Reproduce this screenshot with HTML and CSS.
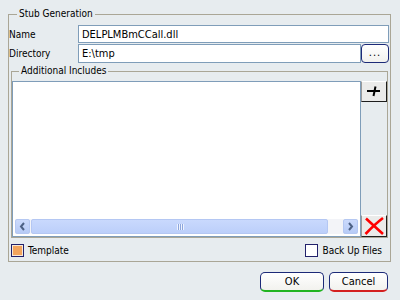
FILE: index.html
```html
<!DOCTYPE html>
<html>
<head>
<meta charset="utf-8">
<link rel="stylesheet" href="styles.css">
</head>
<body>
<div class="dialog">
  <fieldset class="group outer">
    <legend>Stub Generation</legend>
    <div class="row">
      <span class="lbl">Name</span>
      <div class="field">DELPLMBmCCall.dll</div>
    </div>
    <div class="row">
      <span class="lbl">Directory</span>
      <div class="field">E:\tmp</div>
      <button class="browse">...</button>
    </div>
    <fieldset class="group inner">
      <legend>Additional Includes</legend>
      <div class="includes">
        <div class="list">
          <div class="list-body"></div>
          <div class="hscroll">
            <div class="arrow left"><svg width="7" height="9" viewBox="0 0 7 9"><path d="M5 1 L2 4.5 L5 8" fill="none" stroke="#4d6185" stroke-width="2"/></svg></div>
            <div class="thumb"><span class="grip"></span></div>
            <div class="track"></div>
            <div class="arrow right"><svg width="7" height="9" viewBox="0 0 7 9"><path d="M2 1 L5 4.5 L2 8" fill="none" stroke="#4d6185" stroke-width="2"/></svg></div>
          </div>
        </div>
        <div class="side">
          <button class="tool"><svg width="24" height="19" viewBox="0 0 24 19"><path d="M5 9 H18" stroke="#000" stroke-width="2"/><path d="M13.5 4.5 L11.5 14" stroke="#000" stroke-width="2"/></svg></button>
          <button class="tool"><svg width="24" height="20" viewBox="0 0 24 20"><path d="M4 2.5 Q11 9 21 18" fill="none" stroke="#ff0000" stroke-width="2.6"/><path d="M21 2 Q13 8 3.5 18" fill="none" stroke="#ff0000" stroke-width="2.6"/></svg></button>
        </div>
      </div>
    </fieldset>
    <div class="checks">
      <span class="check"><span class="box on"></span>Template</span>
      <span class="check"><span class="box"></span>Back Up Files</span>
    </div>
  </fieldset>
  <div class="actions">
    <button class="btn ok">OK</button>
    <button class="btn cancel">Cancel</button>
  </div>
</div>
</body>
</html>
```
FILE: styles.css
```css
html, body {
  margin: 0;
  padding: 0;
}
body {
  width: 400px;
  height: 300px;
  overflow: hidden;
  background: #e7ecef;
  font-family: "DejaVu Sans Condensed", "Liberation Sans", sans-serif;
  font-size: 10px;
  color: #000;
}
.dialog {
  padding: 8px 0 0 8px;
}
.group {
  margin: 0;
  border: 1px solid #aaa696;
  box-sizing: border-box;
  min-width: 0;
}
.group > legend {
  line-height: 12px;
  padding: 0 2px;
}
.outer {
  width: 383px;
  padding: 5px 1px 4px 0;
}
.outer > legend {
  margin-left: 8px;
}
.row {
  display: flex;
  height: 18px;
  align-items: stretch;
  margin-bottom: 1px;
}
.row + .row {
  height: 19px;
}
.lbl {
  width: 69px;
  display: flex;
  align-items: center;
}
.field {
  flex: 1;
  background: #fff;
  border: 1px solid #7f9db9;
  padding-left: 3px;
  display: flex;
  align-items: center;
  font-size: 11px;
}
.browse {
  width: 28px;
  margin: 0;
  padding: 0 0 3px;
  border: 1px solid #1c2a78;
  border-radius: 4px;
  background: linear-gradient(#fff, #f1f1ee);
  font: inherit;
  font-size: 11px;
  letter-spacing: 1px;
  display: flex;
  align-items: flex-end;
  justify-content: center;
}
.inner {
  margin: 2px 1px 0 2px;
  padding: 4px 0 0 0;
}
.inner > legend {
  margin-left: 7px;
}
.includes {
  display: flex;
  height: 156px;
}
.list {
  width: 350px;
  box-sizing: border-box;
  border: 1px solid #7f9db9;
  background: #fff;
  padding: 2px;
  display: flex;
  flex-direction: column;
}
.list-body {
  flex: 1;
}
.hscroll {
  height: 15px;
  display: flex;
  background: #f3f4f8;
}
.arrow {
  width: 15px;
  box-sizing: border-box;
  border: 1px solid #b5c8f2;
  border-radius: 2px;
  background: linear-gradient(#cbdafc, #b7cbf6);
  display: flex;
  align-items: center;
  justify-content: center;
}
.thumb {
  width: 297px;
  margin-left: 1px;
  box-sizing: border-box;
  border: 1px solid #b4c7f3;
  border-radius: 2px;
  background: linear-gradient(#c9d9fd, #bccffa);
  display: flex;
  align-items: center;
  justify-content: center;
}
.grip {
  width: 7px;
  height: 6px;
  background: repeating-linear-gradient(90deg, #eef3ff 0 1px, #8da6dc 1px 2px);
  margin-left: 2px;
}
.track {
  flex: 1;
}
.side {
  width: 26px;
  display: flex;
  flex-direction: column;
  justify-content: space-between;
}
.tool {
  margin: 0;
  padding: 0;
  height: 21px;
  box-sizing: border-box;
  border: 1px solid;
  border-color: #fff #1e1e1e #1e1e1e #9a9a9a;
  background: #ebebea;
  display: flex;
  align-items: center;
  justify-content: center;
}
.tool + .tool {
  height: 22px;
}
.checks {
  display: flex;
  justify-content: space-between;
  align-items: center;
  margin-top: 6px;
  height: 13px;
  padding: 0 7px 0 2px;
}
.check {
  display: flex;
  align-items: center;
  gap: 4px;
  font-size: 10px;
}
.box {
  width: 13px;
  height: 13px;
  box-sizing: border-box;
  border: 1px solid #21216b;
  background: #fff;
}
.box.on {
  background: #f2a45d;
  box-shadow: inset 0 0 0 1px #f6e8da;
}
.actions {
  display: flex;
  justify-content: flex-end;
  gap: 5px;
  margin-top: 10px;
  padding-right: 12px;
}
.btn {
  margin: 0;
  padding: 0;
  height: 20px;
  box-sizing: border-box;
  border: 1px solid #1c2a78;
  border-radius: 5px;
  background: linear-gradient(#ffffff, #f2f2ee);
  font: inherit;
  font-size: 11px;
  display: flex;
  align-items: center;
  justify-content: center;
}
.ok {
  width: 64px;
  border-bottom: 2px solid #21b421;
}
.cancel {
  width: 59px;
  border-bottom: 2px solid #d42020;
}
```
